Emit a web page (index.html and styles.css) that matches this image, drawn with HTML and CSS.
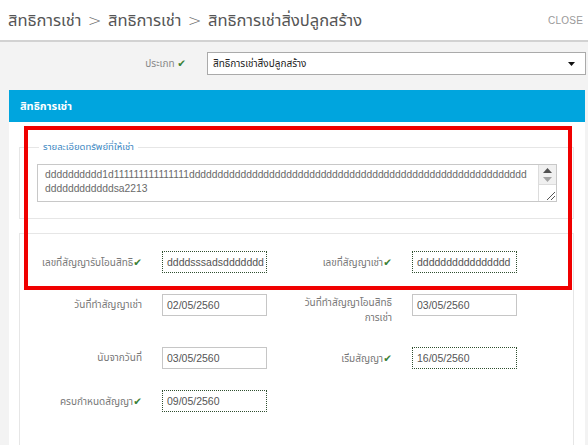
FILE: index.html
```html
<!DOCTYPE html>
<html lang="th">
<head>
<meta charset="utf-8">
<title>สิทธิการเช่าสิ่งปลูกสร้าง</title>
<link rel="stylesheet" href="styles.css">
</head>
<body>
<div class="page">
  <div class="header">
    <div class="crumbs">สิทธิการเช่า <span class="sep">&gt;</span> สิทธิการเช่า <span class="sep">&gt;</span> สิทธิการเช่าสิ่งปลูกสร้าง</div>
    <div class="close">CLOSE</div>
  </div>

  <div class="type-row">
    <div class="type-label">ประเภท <span class="ok">✔</span></div>
    <div class="select">
      <span class="select-text">สิทธิการเช่าสิ่งปลูกสร้าง</span>
      <svg class="caret" width="7" height="4" viewBox="0 0 7 4"><path d="M0 0H7L3.5 4Z" fill="#111"/></svg>
    </div>
  </div>

  <div class="panel">
    <div class="panel-title">สิทธิการเช่า</div>
    <div class="panel-body">
      <fieldset class="group">
        <legend>รายละเอียดทรัพย์ที่ให้เช่า</legend>
        <div class="textarea">
          <textarea readonly>dddddddddd1d111111111111111ddddddddddddddddddddddddddddddddddddddddddddddddddddddddddd
ddddddddddddsa2213</textarea>
          <div class="vscroll">
            <div class="arrows">
              <svg width="9" height="5" viewBox="0 0 9 5"><path d="M0 5L4.5 0L9 5Z" fill="#505050"/></svg>
              <svg width="9" height="5" viewBox="0 0 9 5"><path d="M0 0H9L4.5 5Z" fill="#a3a3a3"/></svg>
            </div>
            <div class="grip">
              <svg width="9" height="9" viewBox="0 0 9 9"><path d="M1 9L9 1M5 9L9 5" stroke="#555" stroke-width="1"/></svg>
            </div>
          </div>
        </div>
      </fieldset>

      <div class="details">
        <div class="field">
          <div class="label">เลขที่สัญญารับโอนสิทธิ<span class="ok">✔</span></div>
          <div class="input req">ddddsssadsddddddd</div>
        </div>
        <div class="field">
          <div class="label">เลขที่สัญญาเช่า<span class="ok">✔</span></div>
          <div class="input req">dddddddddddddddd</div>
        </div>
        <div class="field">
          <div class="label">วันที่ทำสัญญาเช่า</div>
          <div class="input">02/05/2560</div>
        </div>
        <div class="field">
          <div class="label two">วันที่ทำสัญญาโอนสิทธิ<br>การเช่า</div>
          <div class="input">03/05/2560</div>
        </div>
        <div class="field">
          <div class="label">นับจากวันที่</div>
          <div class="input">03/05/2560</div>
        </div>
        <div class="field">
          <div class="label">เริ่มสัญญา<span class="ok">✔</span></div>
          <div class="input req">16/05/2560</div>
        </div>
        <div class="field">
          <div class="label">ครบกำหนดสัญญา<span class="ok">✔</span></div>
          <div class="input req">09/05/2560</div>
        </div>
      </div>
    </div>
  </div>

  <div class="highlight"></div>
</div>
</body>
</html>
```
FILE: styles.css
```css
* { box-sizing: border-box; }

html, body {
  margin: 0;
  padding: 0;
}

body {
  background: #f3f3f3;
  font-family: Tahoma, "Noto Sans Thai", "Noto Sans Thai UI", "Loma", "Garuda", "Liberation Sans", "DejaVu Sans", sans-serif;
  color: #555;
}

.page {
  position: relative;
  width: 588px;
  height: 445px;
  overflow: hidden;
}

/* header */
.header {
  height: 42px;
  background: #fff;
  border-bottom: 2px solid #d2d2d2;
  display: flex;
  align-items: center;
  justify-content: space-between;
  padding: 0 5px 0 8px;
}

.crumbs {
  font-size: 16.5px;
  color: #555;
  white-space: nowrap;
}

.crumbs .sep {
  font-family: "DejaVu Sans", sans-serif;
  font-weight: 200;
  color: #666;
  margin: 0 2px;
}

.close {
  font-family: "Liberation Sans", Arial, sans-serif;
  font-size: 10px;
  color: #999;
  letter-spacing: 0.2px;
}

/* type row */
.type-row {
  display: flex;
  align-items: center;
  margin-top: 10px;
}

.type-label {
  width: 186px;
  text-align: right;
  font-size: 10px;
  color: #888;
  margin-right: 21px;
}

.ok {
  font-family: "DejaVu Sans", sans-serif;
  color: #3a8036;
  font-size: 10.5px;
}

.select {
  width: 379px;
  height: 23px;
  background: #fff;
  border: 1px solid #aaa;
  display: flex;
  align-items: center;
  justify-content: space-between;
  padding: 0 10px 0 5px;
}

.select-text {
  font-size: 10px;
  color: #222;
}

.caret { display: block; }

/* panel */
.panel {
  margin: 15px 3px 0 9px;
  width: 576px;
}

.panel-title {
  height: 32px;
  background: #00a5de;
  color: #fff;
  font-size: 11px;
  font-weight: bold;
  display: flex;
  align-items: center;
  padding-left: 11px;
}

.panel-body {
  background: #fff;
  padding: 19px 0 0 10px;
  min-height: 340px;
}

.group {
  width: 555px;
  margin: 0;
  min-width: 0;
  border: 1px solid #e6e6e6;
  padding: 11px 16px 16px 17px;
}

.group legend {
  font-size: 9.5px;
  line-height: 12px;
  color: #3c87c2;
  padding: 0 4px;
  margin-left: 2px;
}

.textarea {
  display: flex;
  height: 38px;
  border: 1px solid #c8c8c8;
  background: #fff;
}

.textarea textarea {
  flex: 1;
  border: none;
  outline: none;
  resize: none;
  overflow: hidden;
  margin: 0;
  padding: 3px 7px;
  font-family: "Liberation Sans", Arial, sans-serif;
  font-size: 10.3px;
  line-height: 14px;
  color: #6a6a6a;
  white-space: pre;
  background: transparent;
}

.vscroll {
  width: 18px;
  display: flex;
  flex-direction: column;
  border-left: 1px solid #dcdcdc;
}

.arrows {
  height: 20px;
  background: #f0f0f0;
  display: flex;
  flex-direction: column;
  align-items: center;
  justify-content: center;
  gap: 4px;
  border-bottom: 1px solid #dcdcdc;
}

.arrows svg { display: block; }

.grip {
  flex: 1;
  display: flex;
  align-items: flex-end;
  justify-content: flex-end;
  padding: 0 1px 1px 0;
}

.grip svg { display: block; }

/* details */
.details {
  width: 555px;
  margin-top: 14px;
  border: 1px solid #e6e6e6;
  border-bottom: none;
  padding: 17px 0 60px 12px;
  display: grid;
  grid-template-columns: 250px 250px;
  row-gap: 21px;
}

.field {
  display: flex;
  align-items: flex-start;
}

.label {
  width: 110px;
  margin-right: 20px;
  text-align: right;
  font-size: 10px;
  line-height: 14px;
  padding-top: 4px;
  color: #777;
  white-space: nowrap;
}

.label.two {
  line-height: 15px;
  padding-top: 2px;
}

.input {
  width: 105px;
  height: 22px;
  border: 1px solid #c6c6c6;
  background: #fff;
  font-family: "Liberation Sans", Arial, sans-serif;
  font-size: 10.5px;
  color: #555;
  padding: 0 4px;
  display: flex;
  align-items: center;
  overflow: hidden;
  white-space: nowrap;
}

.input.req {
  border: 1px dotted #2f4f2f;
}

/* annotation overlay */
.highlight {
  position: absolute;
  left: 24px;
  top: 126px;
  width: 548px;
  height: 164px;
  border: 4px solid #f00000;
  pointer-events: none;
}
```
